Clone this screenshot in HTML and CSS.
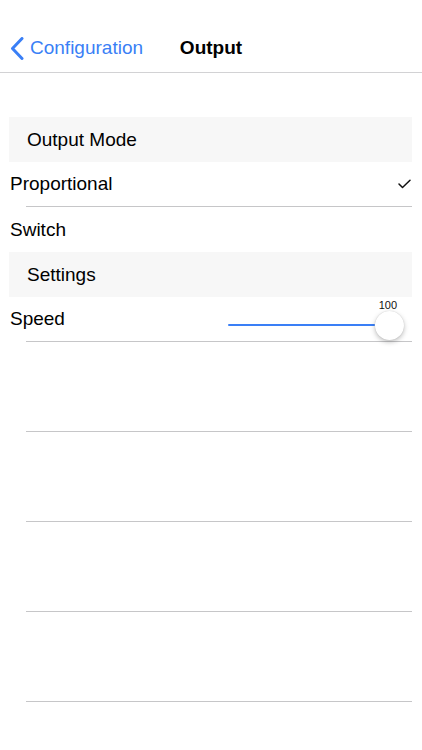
FILE: index.html
```html
<!DOCTYPE html>
<html lang="en">
<head>
    <meta charset="UTF-8">
    <meta name="viewport" content="width=device-width, initial-scale=1.0">
    <title>Output</title>
    <link rel="stylesheet" href="styles.css">
</head>
<body>
    <div class="nav-bar">
        <div class="nav-back">
            <svg class="back-icon" width="14" height="23" viewBox="0 0 14 23">
                <path d="M12 1.5 L2.5 11.5 L12 21.5" fill="none" stroke="#3a7ff6" stroke-width="3" stroke-linecap="round" stroke-linejoin="round"/>
            </svg>
            <span>Configuration</span>
        </div>
        <div class="nav-title">Output</div>
        <div></div>
    </div>

    <div class="table">
        <div class="section-header">Output Mode</div>
        <div class="cell">
            <div class="cell-content">
                <span>Proportional</span>
                <svg class="check" width="13" height="10" viewBox="0 0 13 10">
                    <path d="M1 5 L4.5 8.5 L12 1.2" fill="none" stroke="#111" stroke-width="1.5" stroke-linecap="round" stroke-linejoin="round"/>
                </svg>
            </div>
            <div class="sep"></div>
        </div>
        <div class="cell">
            <div class="cell-content last">Switch</div>
        </div>

        <div class="section-header">Settings</div>
        <div class="cell">
            <div class="cell-content">
                <span>Speed</span>
                <div class="slider">
                    <div class="slider-value">100</div>
                    <div class="slider-control">
                        <div class="slider-track"></div>
                        <div class="slider-thumb"></div>
                    </div>
                </div>
            </div>
            <div class="sep"></div>
        </div>
        <div class="cell">
            <div class="cell-content empty"></div>
            <div class="sep"></div>
        </div>
        <div class="cell">
            <div class="cell-content empty"></div>
            <div class="sep"></div>
        </div>
        <div class="cell">
            <div class="cell-content empty"></div>
            <div class="sep"></div>
        </div>
        <div class="cell">
            <div class="cell-content empty"></div>
            <div class="sep"></div>
        </div>
    </div>
</body>
</html>
```

FILE: styles.css
```css
body {
    margin: 0;
    padding: 0;
    background-color: #fff;
    color: #000;
    font-family: 'Liberation Sans', Arial, sans-serif;
    font-size: 19px;
    overflow: hidden;
}

.nav-bar {
    height: 73px;
    box-sizing: border-box;
    padding-top: 24px;
    display: grid;
    grid-template-columns: 1fr auto 1fr;
    align-items: center;
    border-bottom: 1px solid #d2d2d4;
}

.nav-back {
    display: flex;
    align-items: center;
    gap: 6px;
    padding-left: 10px;
    color: #3a7ff6;
}

.back-icon {
    display: block;
}

.nav-title {
    font-weight: bold;
}

.table {
    margin: 44px 10px 0 9px;
}

.section-header {
    height: 45px;
    background-color: #f7f7f7;
    display: flex;
    align-items: center;
    padding-left: 18px;
}

.cell-content {
    height: 44px;
    display: flex;
    align-items: center;
    justify-content: space-between;
    padding-left: 1px;
}

.cell-content.last {
    height: 45px;
}

.cell-content.empty {
    height: 89px;
}

.sep {
    height: 1px;
    margin-left: 17px;
    background-color: #c6c6c8;
}

.check {
    display: block;
    margin-right: 1px;
}

.slider {
    width: 176px;
    margin-right: 8px;
    display: flex;
    flex-direction: column;
    align-items: flex-end;
}

.slider-value {
    font-size: 11px;
    line-height: 12px;
    margin-right: 7px;
    color: #111;
}

.slider-control {
    width: 100%;
    display: flex;
    align-items: center;
}

.slider-track {
    flex: 1;
    height: 2px;
    background-color: #3a7ff6;
    border-radius: 1px;
}

.slider-thumb {
    width: 29px;
    height: 29px;
    border-radius: 50%;
    background-color: #fff;
    box-shadow: 0 2px 5px rgba(0,0,0,0.25), 0 0 1px rgba(0,0,0,0.2);
}
```
